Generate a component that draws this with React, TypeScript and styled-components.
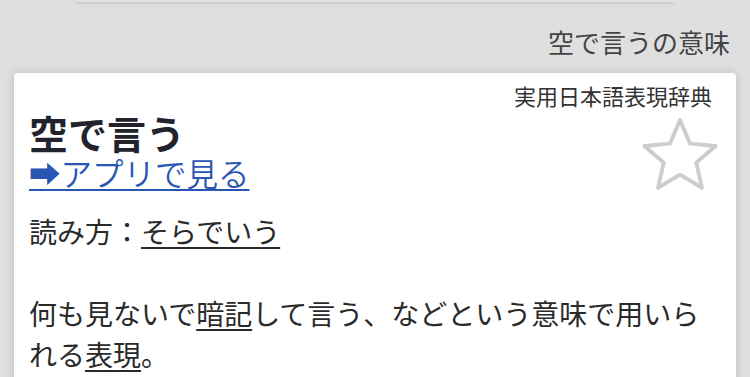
import React from "react";
import styled, { createGlobalStyle } from "styled-components";

const Global = createGlobalStyle`
  html, body {
    margin: 0;
    padding: 0;
    background: #dfdfdf;
    font-family: "Noto Sans CJK JP", "Noto Sans", sans-serif;
    overflow: hidden;
  }
`;

const Page = styled.div`
  width: 750px;
  height: 377px;
  overflow: hidden;
`;

const TopStrip = styled.div`
  margin: 0 76px 0 75px;
  height: 2px;
  background: #e3e3e3;
  box-shadow: 0 1px 3px rgba(0, 0, 0, 0.18);
`;

const PageTitle = styled.div`
  margin-top: 22px;
  padding-right: 20px;
  text-align: right;
  font-size: 26px;
  line-height: 36px;
  color: #444;
`;

const Card = styled.div`
  position: relative;
  margin: 13px 14px 0 14px;
  background: #fff;
  border-radius: 4px;
  box-shadow: 0 0 10px rgba(0, 0, 0, 0.16);
  padding: 7px 15px 20px 15px;
  height: 320px;
`;

const Source = styled.div`
  text-align: right;
  padding-right: 9px;
  font-size: 22px;
  line-height: 30px;
  color: #333;
`;

const Title = styled.h1`
  margin: 0;
  font-size: 39px;
  line-height: 44px;
  font-weight: 700;
  color: #22232c;
`;

const AppLink = styled.a`
  display: inline-block;
  font-size: 31.5px;
  line-height: 36px;
  font-weight: 350;
  color: #2a56b3;
  text-decoration: underline;
  text-decoration-thickness: 2px;
  text-underline-offset: 3px;
`;

const Body = styled.div`
  margin-top: 20px;
  font-size: 28px;
  line-height: 41px;
  color: #2a2a2a;
`;

const Under = styled.span`
  text-decoration: underline;
  text-decoration-thickness: 2px;
  text-underline-offset: 4px;
`;

const StarButton = styled.div`
  position: absolute;
  top: 44px;
  right: 17px;
  width: 78px;
  height: 74px;
`;

const Star = () => (
  <svg width="78" height="74" viewBox="0 0 100 95">
    <polygon
      points="50,4 62.93,34.2 95.65,37.17 70.92,58.8 78.21,90.83 50,74 21.79,90.83 29.08,58.8 4.35,37.17 37.07,34.2"
      fill="none"
      stroke="#cdcdcd"
      strokeWidth="5"
      strokeLinejoin="round"
    />
  </svg>
);

export default function App() {
  return (
    <Page>
      <Global />
      <TopStrip />
      <PageTitle>空で言うの意味</PageTitle>
      <Card>
        <Source>実用日本語表現辞典</Source>
        <Title>空で言う</Title>
        <AppLink href="#">➡アプリで見る</AppLink>
        <StarButton>
          <Star />
        </StarButton>
        <Body>
          読み方：<Under>そらでいう</Under>
          <br />
          <br />
          何も見ないで<Under>暗記</Under>して言う、などという意味で用いられる<Under>表現</Under>。
        </Body>
      </Card>
    </Page>
  );
}
